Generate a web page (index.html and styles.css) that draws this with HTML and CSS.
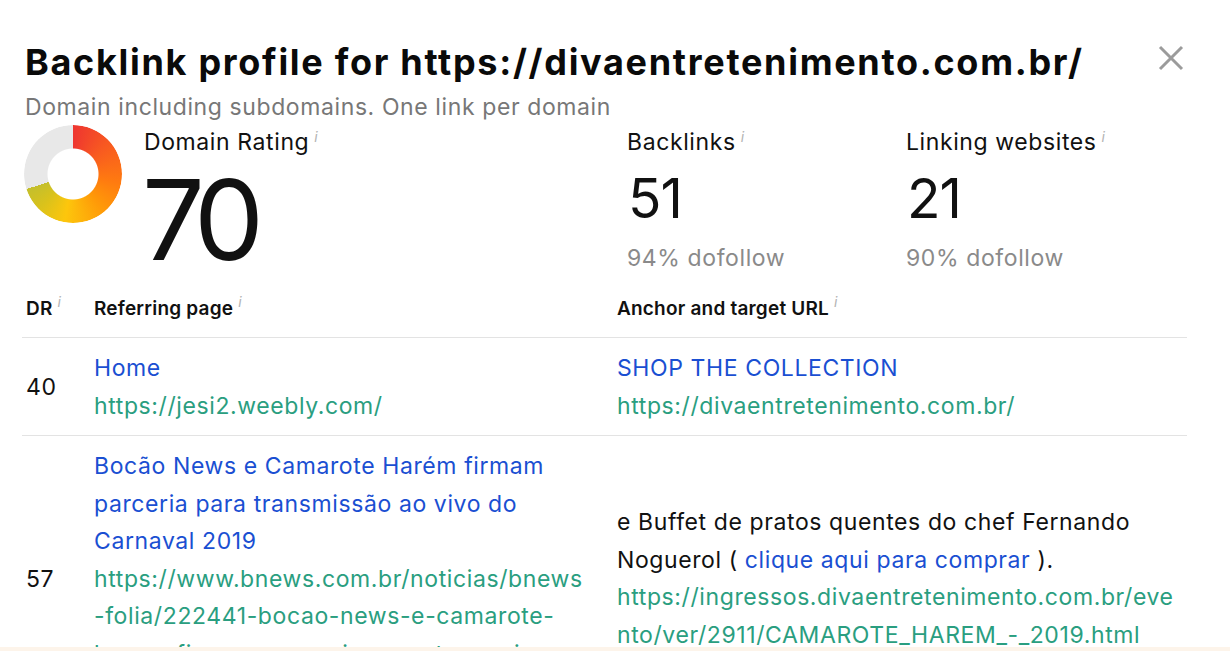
FILE: index.html
```html
<!DOCTYPE html>
<html lang="pt">
<head>
<meta charset="utf-8">
<title>Backlink profile</title>
<link rel="stylesheet" href="styles.css">
</head>
<body>
<main class="modal">
  <header class="head">
    <h1 class="title">Backlink profile for https://divaentretenimento.com.br/</h1>
    <button class="close" aria-label="Close">
      <svg width="26" height="26" viewBox="0 0 26 26"><path d="M2 2L24 24M24 2L2 24" stroke="#9b9b9b" stroke-width="3" fill="none"/></svg>
    </button>
  </header>
  <p class="sub">Domain including subdomains. One link per domain</p>

  <section class="stats">
    <div class="dr">
      <div class="donut"></div>
      <div class="dr-text">
        <div class="label">Domain Rating<sup class="info">i</sup></div>
        <div class="big">70</div>
      </div>
    </div>
    <div class="stat bl">
      <div class="label">Backlinks<sup class="info">i</sup></div>
      <div class="num">51</div>
      <div class="note">94% dofollow</div>
    </div>
    <div class="stat lw">
      <div class="label">Linking websites<sup class="info">i</sup></div>
      <div class="num">21</div>
      <div class="note">90% dofollow</div>
    </div>
  </section>

  <section class="tbl">
    <div class="row thead">
      <div class="cell">DR<sup class="info">i</sup></div>
      <div class="cell">Referring page<sup class="info">i</sup></div>
      <div class="cell">Anchor and target URL<sup class="info">i</sup></div>
    </div>
    <div class="row">
      <div class="cell dr-cell">40</div>
      <div class="cell">
        <a class="link">Home</a>
        <div class="url">https://jesi2.weebly.com/</div>
      </div>
      <div class="cell">
        <a class="link">SHOP THE COLLECTION</a>
        <div class="url">https://divaentretenimento.com.br/</div>
      </div>
    </div>
    <div class="row">
      <div class="cell dr-cell">57</div>
      <div class="cell">
        <a class="link">Bocão News e Camarote Harém firmam parceria para transmissão ao vivo do Carnaval 2019</a>
        <div class="url">https://www.bnews.com.br/noticias/bnews-folia/222441-bocao-news-e-camarote-harem-firmam-parceria-para-transmissao-ao-vivo-do-carnaval-2019.html</div>
      </div>
      <div class="cell">
        <div class="anchor-text">e Buffet de pratos quentes do chef Fernando Noguerol ( <a class="link">clique aqui para comprar</a> ).</div>
        <div class="url">https://ingressos.divaentretenimento.com.br/evento/ver/2911/CAMAROTE_HAREM_-_2019.html</div>
      </div>
    </div>
  </section>
</main>
<div class="bottom-bar"></div>
</body>
</html>
```
FILE: styles.css
```css
html, body {
  margin: 0;
  padding: 0;
  overflow: hidden;
  background: #fff;
}
body {
  font-family: Inter, "Noto Sans", sans-serif;
  color: #111;
}
.modal {
  padding: 40px 0 0 25px;
  width: 1162px;
}
.head {
  display: flex;
  justify-content: space-between;
  align-items: flex-start;
}
.title {
  margin: 0;
  font-size: 36px;
  font-weight: 700;
  line-height: 44px;
  letter-spacing: 1.7px;
  color: #0a0a0a;
  white-space: nowrap;
}
.close {
  border: 0;
  background: none;
  padding: 0;
  margin: 5px 3px 0 0;
  width: 26px;
  height: 26px;
  display: flex;
}
.sub {
  margin: 8px 0 0;
  font-size: 23px;
  line-height: 30px;
  letter-spacing: 0.6px;
  color: #777;
}
.stats {
  display: flex;
}
.dr {
  display: flex;
  width: 603px;
  margin-left: -1px;
}
.donut {
  width: 98px;
  height: 98px;
  border-radius: 50%;
  margin-top: 3px;
  background: conic-gradient(#ee3530 0deg, #f85a20 50deg, #ff7a10 100deg, #ff9a08 140deg, #fdc60c 190deg, #d9c21c 225deg, #c4bf2c 252deg, #e8e8e8 252deg, #e8e8e8 360deg);
  -webkit-mask: radial-gradient(circle, transparent 25px, #000 26px);
  mask: radial-gradient(circle, transparent 25px, #000 26px);
  flex: none;
}
.dr-text {
  margin-left: 22px;
}
.label {
  font-size: 23px;
  line-height: 30px;
  letter-spacing: 0.6px;
  margin-top: 5px;
  color: #111;
}
.info {
  font-size: 14px;
  font-style: italic;
  color: #b3b3b3;
  margin-left: 5px;
  vertical-align: 8px;
  line-height: 0;
  font-weight: 400;
  letter-spacing: 0;
}
.big {
  font-size: 111px;
  line-height: 110px;
  letter-spacing: -9px;
  margin-left: -2px;
  margin-top: 8px;
}
.stat {
  width: 279px;
}
.num {
  font-size: 55px;
  line-height: 60px;
  letter-spacing: -1px;
  margin-top: 11px;
  margin-left: 1px;
}
.note {
  font-size: 23px;
  line-height: 30px;
  letter-spacing: 0.6px;
  color: #8a8a8a;
  margin-top: 15px;
}
.tbl {
  margin-left: -3px;
  margin-top: 22px;
  width: 1165px;
}
.row {
  display: grid;
  grid-template-columns: 72px 523px 1fr;
  border-bottom: 1px solid #e3e3e3;
  font-size: 23px;
  letter-spacing: 0.6px;
  line-height: 37.5px;
}
.row .cell {
  padding: 12px 8px 10px 0;
  align-self: center;
}
.row .cell:nth-child(2) {
  padding-right: 30px;
}
.row .cell:first-child {
  padding-left: 4px;
}
.thead {
  font-size: 19px;
  font-weight: 600;
  line-height: 24px;
  letter-spacing: 0.2px;
}
.thead .cell {
  padding: 0 0 16px 0;
}
.thead .cell:first-child {
  padding-left: 4px;
}
.link {
  color: #1a4fd2;
  text-decoration: none;
}
.cell > .link {
  display: block;
}
.url {
  color: #2a9e80;
  overflow-wrap: anywhere;
}
.anchor-text {
  color: #111;
}
.dr-cell {
  color: #111;
}
.bottom-bar {
  position: fixed;
  left: 0;
  right: 0;
  bottom: 0;
  height: 4px;
  background: #fdf4ea;
}
```
